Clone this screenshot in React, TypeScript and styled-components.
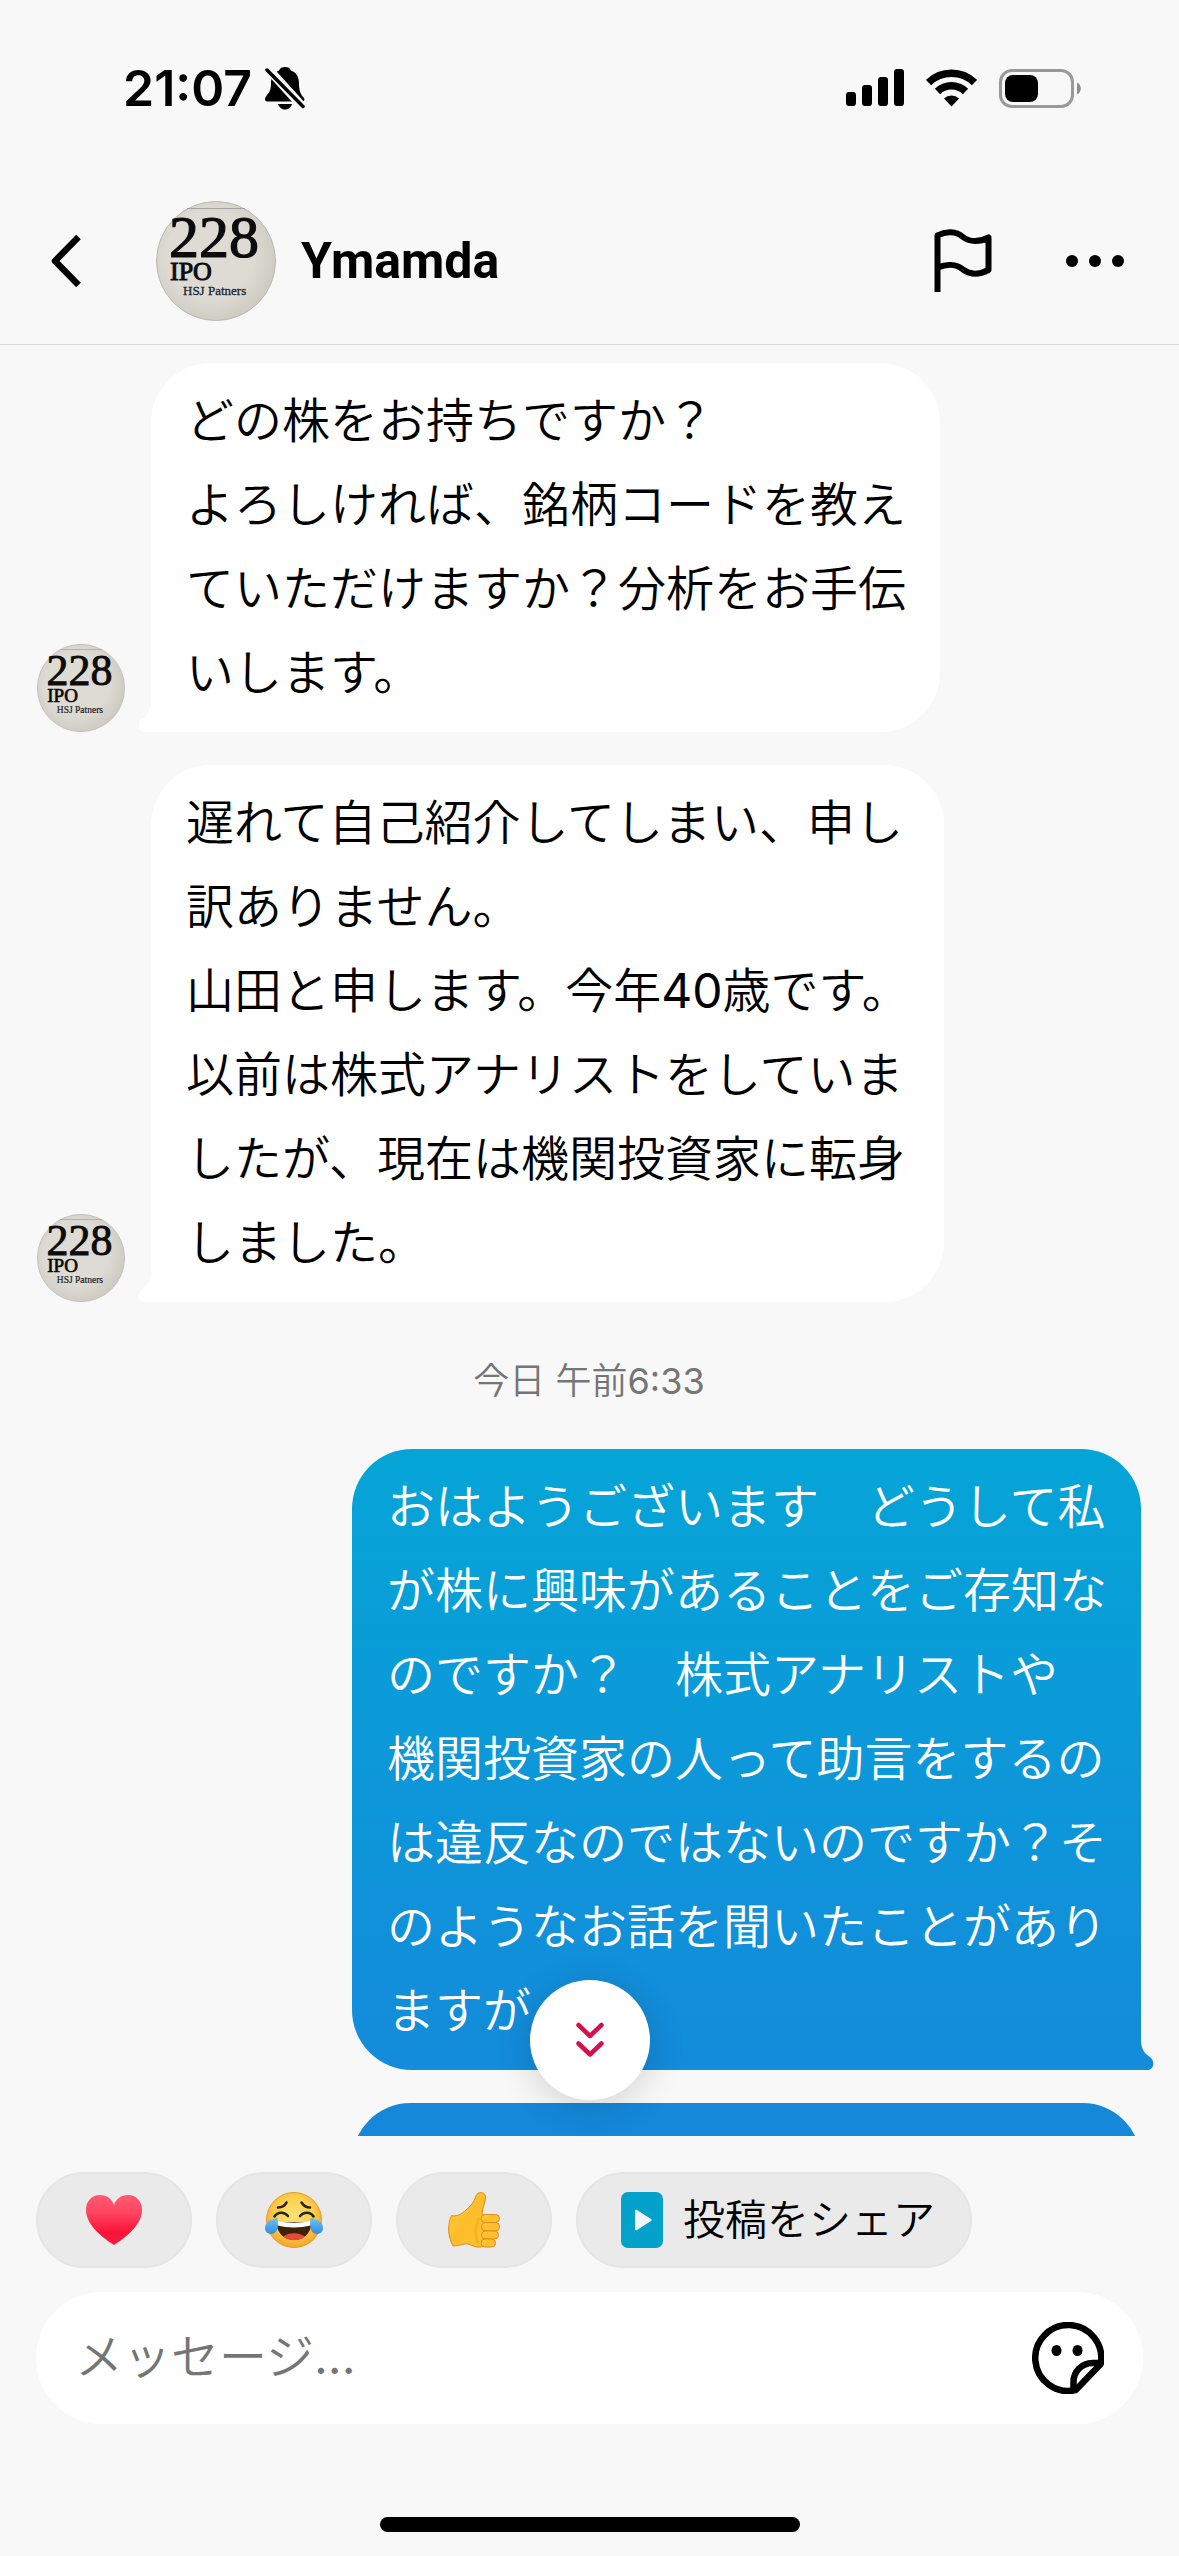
import React from "react";
import styled, { createGlobalStyle, css } from "styled-components";

const GlobalStyle = createGlobalStyle`
  * { box-sizing: border-box; }
  body {
    margin: 0;
    background: #f8f8f8;
    color: #000;
    font-family: Roboto, "Noto Sans CJK JP", sans-serif;
  }
  button { font: inherit; color: inherit; border: 0; padding: 0; background: none; cursor: pointer; }
  svg { display: block; flex: none; }
`;

const jpFont = css`
  font-family: Inter, "Noto Sans CJK JP DemiLight", "Noto Sans CJK JP", sans-serif;
  font-weight: 400;
`;

const Screen = styled.div`
  display: flex;
  flex-direction: column;
  height: 100vh;
  background: #f8f8f8;
`;

const StatusBar = styled.div`
  display: flex;
  align-items: center;
  justify-content: space-between;
  flex: none;
  height: 178px;
  padding: 0 98px 2px 123px;
`;

const StatusGroup = styled.div<{ $gap: number }>`
  display: flex;
  align-items: center;
  gap: ${(p) => p.$gap}px;
`;

const Clock = styled.time`
  font-family: Inter, sans-serif;
  font-size: 50px;
  font-weight: 600;
  line-height: 60px;
`;

const Header = styled.header`
  display: flex;
  align-items: center;
  flex: none;
  height: 167px;
  padding: 0 48px 0 30px;
  border-bottom: 1px solid #d9dadd;
`;

const IconButton = styled.button`
  display: grid;
  place-items: center;
  flex: none;
  width: 72px;
  height: 72px;
`;

const Profile = styled.div`
  display: flex;
  align-items: center;
  flex: 1;
  gap: 25px;
  padding-left: 54px;
`;

const Name = styled.h1`
  margin: 0;
  font-size: 50px;
  font-weight: 700;
  line-height: 60px;
`;

const Actions = styled.div`
  display: flex;
  gap: 60px;
`;

const Conversation = styled.main`
  position: relative;
  flex: 1;
  min-height: 0;
`;

const MessageList = styled.div`
  display: flex;
  flex-direction: column;
  gap: 33px;
  height: 100%;
  padding: 18px 38px 0 37px;
  overflow: hidden;
`;

const Row = styled.div<{ $mine?: boolean }>`
  display: flex;
  flex: none;
  align-items: flex-end;
  justify-content: ${(p) => (p.$mine ? "flex-end" : "flex-start")};
  gap: 26px;
`;

const Bubble = styled.div<{ $mine?: boolean }>`
  ${jpFont}
  position: relative;
  min-height: 120px;
  padding: 16px 34px 17px 35px;
  font-size: 48px;
  line-height: 84px;
  white-space: pre-line;
  color: ${(p) => (p.$mine ? "#fff" : "#000")};
  background: ${(p) =>
    p.$mine ? "linear-gradient(#05a5d7, #148bdb)" : "#fff"};
  border-radius: ${(p) => (p.$mine ? "60px 60px 0 60px" : "60px 60px 60px 0")};
`;

const NextBubble = styled.div`
  flex: none;
  align-self: flex-end;
  width: 789px;
  height: 117px;
  border-radius: 60px;
  background: #1588da;
`;

const Tail = styled.svg<{ $mine?: boolean }>`
  position: absolute;
  bottom: 0;
  ${(p) =>
    p.$mine
      ? "right: -13px; color: #148bdb;"
      : "left: -13px; color: #fff; transform: scaleX(-1);"}
`;

const DateLine = styled.p`
  ${jpFont}
  margin: 0;
  padding: 22px 0 11px;
  font-size: 36px;
  line-height: 48px;
  text-align: center;
  color: #757575;
`;

const JumpButton = styled.button`
  position: absolute;
  bottom: 36px;
  left: calc(50% - 60px);
  display: grid;
  place-items: center;
  width: 120px;
  height: 120px;
  border-radius: 50%;
  background: #fff;
  box-shadow: 0 6px 36px rgba(0, 0, 0, 0.16);
`;

const Composer = styled.footer`
  flex: none;
  padding: 36px 36px 0;
`;

const Chips = styled.div`
  display: flex;
  gap: 24px;
`;

const Chip = styled.button`
  ${jpFont}
  display: flex;
  align-items: center;
  justify-content: center;
  gap: 20px;
  min-width: 156px;
  height: 96px;
  padding: 0 35px 0 43px;
  border: 2px solid #e5e5e7;
  border-radius: 48px;
  background: #eaeaea;
  font-size: 42px;
  line-height: 56px;
`;

const EmojiChip = styled(Chip)`
  padding: 0;
`;

const InputBar = styled.form`
  display: flex;
  align-items: center;
  height: 132px;
  margin-top: 24px;
  padding: 0 39px;
  border-radius: 66px;
  background: #fff;
`;

const MessageInput = styled.input`
  ${jpFont}
  flex: 1;
  min-width: 0;
  height: 84px;
  padding: 0 0 4px;
  border: 0;
  outline: 0;
  background: transparent;
  font-size: 48px;
  &::placeholder { color: #757575; opacity: 1; }
`;

const HomeArea = styled.div`
  display: flex;
  align-items: flex-end;
  justify-content: center;
  height: 132px;
  padding-bottom: 24px;
`;

const HomeBar = styled.div`
  width: 420px;
  height: 15px;
  border-radius: 8px;
  background: #000;
`;

function Avatar({ size }: { size: number }) {
  return (
    <svg width={size} height={size} viewBox="0 0 120 120" role="img" aria-label="228 IPO">
      <defs>
        <radialGradient id="paper" cx="45%" cy="45%" r="60%">
          <stop offset="0.6" stopColor="#dddbd3" />
          <stop offset="1" stopColor="#cbc8bf" />
        </radialGradient>
      </defs>
      <circle cx="60" cy="60" r="59.5" fill="url(#paper)" stroke="#b9b8b4" />
      <path d="M31 7.500H89" stroke="#a5a39e" />
      <g fill="#0c0c0c" fontFamily="'Liberation Serif', serif">
        <text x="13" y="56" fontSize="60" stroke="#0c0c0c" strokeWidth="1.2">228</text>
        <text x="14" y="79" fontSize="26" stroke="#0c0c0c" strokeWidth="1">IPO</text>
        <text x="27" y="94" fontSize="13" fill="#1c2530" stroke="#1c2530" strokeWidth="0.3">HSJ Patners</text>
      </g>
    </svg>
  );
}

function BubbleTail({ mine }: { mine?: boolean }) {
  return (
    <Tail $mine={mine} width="14" height="30" viewBox="0 0 14 30" aria-hidden="true">
      <path d="M0 0H1C1 6 3 11 6 14L11 18C15 22 14 30 7 30H0Z" fill="currentColor" />
    </Tail>
  );
}

function BellOff() {
  return (
    <svg width="40" height="43" viewBox="0 0 40 43" aria-hidden="true">
      <path d="M20 0c3 0 5 1 6 3.500 6 2 8 7 8 13 0 8 2 11 5 14.500 1 2 0 3.500-2 3.500H3c-3 0-4-2-2-5 3-4 5-6 5-13 0-6 2-10.500 8-13C15 1 17 0 20 0Z" />
      <path d="M13 37h14c-1 3.500-4 5.500-7 5.500s-6-2-7-5.500Z" />
      <path d="M-1 1 38 44M3-2 42 41" stroke="#f8f8f8" strokeWidth="4" />
      <path d="M2 3 38 39.500" stroke="#000" strokeWidth="3.500" strokeLinecap="round" />
    </svg>
  );
}

function Signal() {
  return (
    <svg width="58" height="38" viewBox="0 0 58 38" aria-hidden="true">
      <rect y="23" width="10" height="14" rx="3" />
      <rect x="16" y="16" width="10" height="21" rx="3" />
      <rect x="32" y="8" width="10" height="29" rx="3" />
      <rect x="48" width="10" height="37" rx="3" />
    </svg>
  );
}

function Wifi() {
  return (
    <svg width="51" height="38" viewBox="0 0 51 38" aria-hidden="true">
      <g fill="none" stroke="#000" strokeWidth="7.500">
        <path d="M2.500 13.500a33 33 0 0 1 46 0" />
        <path d="M11.500 22.500a20 20 0 0 1 28 0" />
      </g>
      <path d="M25.500 37.500 18 29.500a11 11 0 0 1 15 0Z" />
    </svg>
  );
}

function Battery() {
  return (
    <svg width="82" height="39" viewBox="0 0 82 39" aria-hidden="true">
      <rect x="1.500" y="1.500" width="72" height="36" rx="11.500" fill="none" stroke="#999" strokeWidth="3" />
      <rect x="6" y="6" width="33" height="27" rx="8" />
      <path d="M78 13.500c5 2 5 10 0 12Z" fill="#8c8c8c" />
    </svg>
  );
}

function Heart() {
  return (
    <svg width="56" height="56" viewBox="0 0 56 56" aria-hidden="true">
      <defs>
        <linearGradient id="heart" x1="0" y1="0" x2="0" y2="1">
          <stop offset="0" stopColor="#ff5a72" />
          <stop offset="0.35" stopColor="#ff4562" />
          <stop offset="0.75" stopColor="#fc1237" />
          <stop offset="1" stopColor="#fb1d3f" />
        </linearGradient>
      </defs>
      <path d="M28 53C19 47 0 34 0 18 0 9 6 3 14 3c7 0 12 4 14 10C30 7 35 3 42 3c8 0 14 6 14 15 0 16-19 29-28 35Z" fill="url(#heart)" />
    </svg>
  );
}

function Joy() {
  return (
    <svg width="56" height="56" viewBox="0 0 56 56" overflow="visible" aria-hidden="true">
      <defs>
        <radialGradient id="face" cx="50%" cy="42%" r="58%">
          <stop offset="0" stopColor="#ffe27a" />
          <stop offset="0.6" stopColor="#fdcf4a" />
          <stop offset="1" stopColor="#f2a42c" />
        </radialGradient>
        <linearGradient id="tear" x1="0" y1="0" x2="0" y2="1">
          <stop offset="0" stopColor="#6cc0f5" />
          <stop offset="1" stopColor="#2f8fdd" />
        </linearGradient>
      </defs>
      <circle cx="28" cy="28" r="27.500" fill="url(#face)" stroke="#e89a2c" />
      <g fill="none" stroke="#2c2010" strokeWidth="2.600" strokeLinecap="round">
        <path d="M12 15.500c4 0 7-2 8.500-5M35.500 10.500c2 3 5 5 8.500 5" />
        <path d="M8.500 24.500c3-5 10-5 13.500-.5M34 24c3.500-4.500 10.500-4.500 13.500.5" stroke="#1f2a1a" />
      </g>
      <path d="M10.500 30h35c0 11-8 18-17.500 18s-17.500-7-17.500-18Z" fill="#40200c" />
      <path d="M17 44.500c6-4.500 16-4.500 22 0-6 5-16 5-22 0Z" fill="#e5493a" />
      <path d="M10.500 28.500c11 3 24 3 35 0l-1 5c-10 2.500-23 2.500-33 0Z" fill="#fff" />
      <path d="M11.500 26C5 27-1 30-1 36c0 7 9 8 12 2 1-3 1-8 .5-12Z" fill="url(#tear)" />
      <path d="M44.500 26C51 27 57 30 57 36c0 7-9 8-12 2-1-3-1-8-.5-12Z" fill="url(#tear)" />
    </svg>
  );
}

function ThumbsUp() {
  return (
    <svg width="56" height="56" viewBox="0 0 56 56" aria-hidden="true">
      <defs>
        <linearGradient id="hand" x1="0" y1="0" x2="1" y2="1">
          <stop offset="0" stopColor="#ffcf3a" />
          <stop offset="0.5" stopColor="#fdbd2c" />
          <stop offset="1" stopColor="#ffc52e" />
        </linearGradient>
      </defs>
      <g fill="url(#hand)" stroke="#e08a1c" strokeWidth="1">
        <path d="M5.500 23.500C10 25 16 22 20 18c5-4 8-8 10-14 1-4 8-5 9.500 0 .5 5-3 11-3.500 18l4 2-1 30c-4 1.500-9 1.500-13-.5-3-1.500-5-2-8-1.500-4 1-7 2-11 2C2 45 1 33 5.500 23.500Z" />
        <rect x="35" y="22.500" width="18.500" height="8" rx="4" />
        <rect x="35.500" y="30.500" width="18" height="8.500" rx="4" />
        <rect x="35.500" y="39" width="17" height="8" rx="4" />
        <rect x="35" y="47" width="14.500" height="8" rx="4" />
      </g>
      <path d="M33 26c-4 6-4 19-1 25" fill="none" stroke="#f29c1f" strokeWidth="3" opacity="0.4" />
    </svg>
  );
}

function PlayCard() {
  return (
    <svg width="42" height="56" viewBox="0 0 42 56" aria-hidden="true">
      <rect width="42" height="56" rx="7" fill="#04a2cb" />
      <path d="M14 19v18c0 1 1 1.500 2 1l14-9c1-.7 1-1.300 0-2L16 18c-1-.5-2 0-2 1Z" fill="#f0f6f8" />
    </svg>
  );
}

function Sticker() {
  return (
    <svg width="72" height="72" viewBox="0 0 72 72" fill="none" stroke="#000" strokeWidth="6.500" aria-hidden="true">
      <path d="M43.500 68.200A33 33 0 1 1 68.700 42Z" strokeLinejoin="round" />
      <path d="M41.500 68V60a19 19 0 0 1 19-19H69" />
      <g fill="#000" stroke="none">
        <ellipse cx="24.500" cy="28.500" rx="5" ry="5.500" />
        <ellipse cx="45.500" cy="28.500" rx="5" ry="5.500" />
      </g>
    </svg>
  );
}

const incoming = [
  `どの株をお持ちですか？
よろしければ、銘柄コードを教え
ていただけますか？分析をお手伝
いします。`,
  `遅れて自己紹介してしまい、申し
訳ありません。
山田と申します。今年40歳です。
以前は株式アナリストをしていま
したが、現在は機関投資家に転身
しました。`,
];

const reply = `おはようございます　どうして私
が株に興味があることをご存知な
のですか？　株式アナリストや
機関投資家の人って助言をするの
は違反なのではないのですか？そ
のようなお話を聞いたことがあり
ますが`;

export default function App() {
  return (
    <Screen lang="ja">
      <GlobalStyle />
      <StatusBar>
        <StatusGroup $gap={13}>
          <Clock>21:07</Clock>
          <BellOff />
        </StatusGroup>
        <StatusGroup $gap={22}>
          <Signal />
          <Wifi />
          <Battery />
        </StatusGroup>
      </StatusBar>
      <Header>
        <IconButton aria-label="戻る">
          <svg width="32" height="54" viewBox="0 0 32 54" fill="none" stroke="#000" strokeWidth="6.500">
            <path d="M28.500 3 5 27 28.500 51" strokeLinejoin="round" />
          </svg>
        </IconButton>
        <Profile>
          <Avatar size={120} />
          <Name>Ymamda</Name>
        </Profile>
        <Actions>
          <IconButton aria-label="報告">
            <svg width="58" height="64" viewBox="0 0 58 64" fill="none" stroke="#000" strokeWidth="6" strokeLinejoin="round">
              <path d="M3.500 63V6.500C12 2 22 2 29 8c7 5.500 17 5 25.500.5V41c-8.500 4.500-18 5-25.500-.5C22 34.500 12 35 3.500 38.500" />
            </svg>
          </IconButton>
          <IconButton aria-label="その他">
            <svg width="58" height="12" viewBox="0 0 58 12">
              <circle cx="6" cy="6" r="6" />
              <circle cx="29" cy="6" r="6" />
              <circle cx="52" cy="6" r="6" />
            </svg>
          </IconButton>
        </Actions>
      </Header>
      <Conversation>
        <MessageList>
          {incoming.map((text) => (
            <Row key={text}>
              <Avatar size={88} />
              <Bubble>
                {text}
                <BubbleTail />
              </Bubble>
            </Row>
          ))}
          <DateLine>今日 午前6:33</DateLine>
          <Row $mine>
            <Bubble $mine>
              {reply}
              <BubbleTail mine />
            </Bubble>
          </Row>
          <NextBubble />
        </MessageList>
        <JumpButton aria-label="最新のメッセージへ">
          <svg width="28" height="36" viewBox="0 0 28 36" fill="none" stroke="#d5104a" strokeWidth="4.500" strokeLinecap="round" strokeLinejoin="round">
            <path d="M2.500 3 14 14 25.500 3M2.500 21.500 14 32.500 25.500 21.500" />
          </svg>
        </JumpButton>
      </Conversation>
      <Composer>
        <Chips>
          <EmojiChip aria-label="ハート"><Heart /></EmojiChip>
          <EmojiChip aria-label="うれし泣き"><Joy /></EmojiChip>
          <EmojiChip aria-label="いいね"><ThumbsUp /></EmojiChip>
          <Chip><PlayCard />投稿をシェア</Chip>
        </Chips>
        <InputBar onSubmit={(e) => e.preventDefault()}>
          <MessageInput aria-label="メッセージ" placeholder="メッセージ..." />
          <IconButton type="button" aria-label="スタンプ"><Sticker /></IconButton>
        </InputBar>
      </Composer>
      <HomeArea><HomeBar /></HomeArea>
    </Screen>
  );
}
